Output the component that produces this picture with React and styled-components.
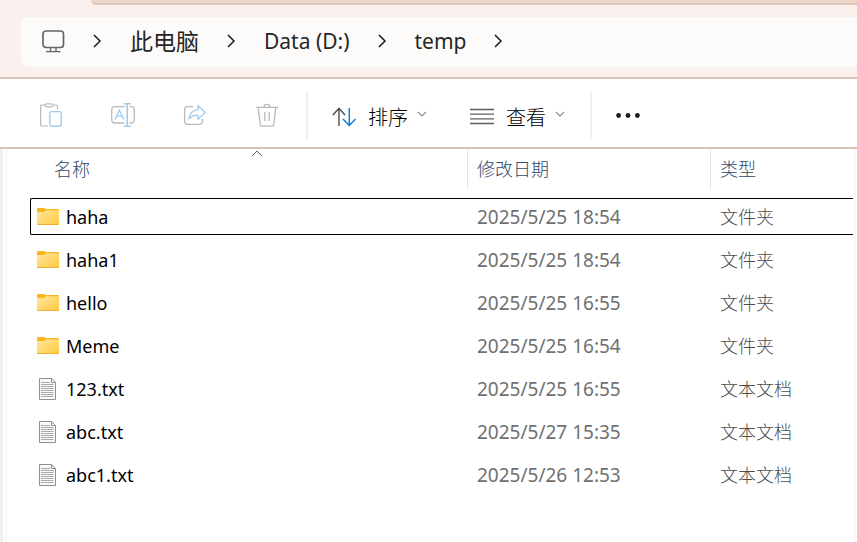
import { useState } from "react";
import styled, { createGlobalStyle, css } from "styled-components";

const GlobalStyle = createGlobalStyle`
  :root {
    --accent-line: #d9c3b7;
    --accent-025: #faf0ed;
    --accent-200: #ecd5c7;
    --gray-050: #f0f0f0;
    --font-small: 18px;
    --font-medium: 20px;
    --font-large: 21px;
  }
  * {
    box-sizing: border-box;
  }
  body {
    margin: 0;
    background: #fff;
    font-family: "Noto Sans", "Noto Sans CJK SC", sans-serif;
    font-size: var(--font-small);
  }
`;

const Window = styled.div`
  display: flex;
  flex-direction: column;
  min-height: 100vh;
`;

const Header = styled.header`
  background: var(--accent-025);
  border-bottom: 2px solid var(--accent-line);
  padding-bottom: 10px;
`;

const TabStrip = styled.div`
  height: 5px;
  margin-left: 91px;
  background: var(--accent-200);
  border-bottom: 2px solid #dfc6b8;
  border-bottom-left-radius: 5px;
`;

const AddressBar = styled.nav`
  display: flex;
  align-items: center;
  gap: 28px;
  height: 50px;
  margin: 12px 0 0 21px;
  padding: 0 0 2px 20px;
  background: #fcfbf9;
  border-radius: 7px 0 0 7px;
`;

const Crumb = styled.button`
  all: unset;
  display: flex;
  align-items: center;
  color: #262626;
  font-size: ${({ $cjk }) => ($cjk ? "23px" : "var(--font-large)")};
  line-height: 30px;
  white-space: nowrap;
  cursor: pointer;
`;

const Toolbar = styled.div`
  display: flex;
  align-items: center;
  height: 70px;
  padding: 4px 27px 0;
  border-bottom: 2px solid var(--accent-line);
`;

const IconGroup = styled.div`
  display: flex;
  gap: 24px;
`;

const MenuGroup = styled.div`
  display: flex;
  gap: 19px;
`;

const ToolButton = styled.button`
  display: flex;
  justify-content: center;
  align-items: center;
  height: 48px;
  padding: 0 12px;
  border: none;
  border-radius: 4px;
  background: none;
  color: #000;
  font-family: inherit;
  font-size: var(--font-medium);
  font-weight: 300;
  line-height: 28px;
  white-space: nowrap;
  cursor: pointer;

  &:hover:enabled {
    background: #f5f5f5;
  }
  &:disabled {
    cursor: default;
  }
`;

const Label = styled.span`
  margin: 0 9px 0 12px;
  padding-top: 5px;
`;

const Separator = styled.div`
  width: 2px;
  height: 48px;
  margin: 0 12px 0 ${({ $gap }) => $gap};
  background: var(--gray-050);
`;

const Content = styled.main`
  display: flex;
  flex: 1;
  border-left: 3px solid var(--gray-050);
  padding: 0 1px 0 2px;
`;

const Pane = styled.div`
  flex: 1;
  border-left: 2px solid #f7f7f7;
  border-right: 2px solid #f8f8f8;
  padding: 0 1px 0 23px;
`;

const Table = styled.table`
  display: block;
  width: 100%;
`;

const THead = styled.thead`
  display: block;
  margin-bottom: 9px;
`;

const TBody = styled.tbody`
  display: flex;
  flex-direction: column;
  gap: 6px;
`;

const columns = css`
  display: grid;
  grid-template-columns: 437fr 243fr 142fr;
  border: 1px solid transparent;
  border-right: none;
`;

const HeadRow = styled.tr`
  ${columns}
  border-width: 0 0 0 1px;
`;

const HeadCell = styled.th`
  position: relative;
  height: 40px;
  margin-left: ${({ $inset }) => $inset || "0"};
  padding: 0 9px;
  border-right: 1px solid ${({ $last }) => ($last ? "transparent" : "#e5e5e5")};
  color: #2f4769;
  font-weight: 300;
  line-height: 40px;
  text-align: left;
  white-space: nowrap;
`;

const SortMark = styled.svg`
  position: absolute;
  top: 1px;
  left: calc(50% - 5px);
`;

const Row = styled.tr`
  ${columns}
  border-color: ${({ $focused }) => ($focused ? "#000" : "transparent")};
  border-radius: 2px 0 0 2px;
`;

const Cell = styled.td`
  height: 35px;
  padding: 2px 9px 0;
  color: #707070;
  font-size: var(--font-small);
  line-height: 33px;
  white-space: nowrap;
`;

const DateCell = styled(Cell)`
  font-size: 19px;
`;

const TypeCell = styled(Cell)`
  color: #4c4c4c;
  font-weight: 300;
`;

const NameCell = styled(Cell)`
  display: flex;
  align-items: center;
  gap: 6px;
  padding: 0 6px;
  color: #000;
`;

const FileName = styled.span`
  padding-top: 2px;
`;

function Monitor() {
  return (
    <svg width="24" height="24" viewBox="0 0 24 24" fill="none" stroke="#666" strokeWidth="1.7">
      <rect x="2" y="2" width="20.5" height="16.5" rx="3" />
      <path d="M9.5 18.5v4M15 18.5v4M5 22.6h14.5" strokeWidth="1.4" />
    </svg>
  );
}

function ChevronRight() {
  return (
    <svg width="9" height="14" viewBox="0 0 9 14" fill="none" stroke="#1b1b1b" strokeWidth="1.5">
      <path d="M1 1l6 6-6 6" />
    </svg>
  );
}

function ChevronDown() {
  return (
    <svg width="10" height="10" viewBox="0 0 10 10" fill="none" stroke="#8a8a8a" strokeWidth="1.1">
      <path d="M1 2l4 4 4-4" />
    </svg>
  );
}

function Paste() {
  return (
    <svg width="24" height="24" viewBox="0 0 24 24" fill="none" strokeWidth="1.2">
      <g stroke="#b9b9b9">
        <path d="M6 2H2.6Q1.6 2 1.6 3v19q0 1 1 1H9M14 2h3.4q1 0 1 1v3" />
        <rect x="6" y=".8" width="8" height="3" rx="1.5" />
      </g>
      <rect x="10.8" y="8.6" width="11.4" height="14.6" rx="1.6" stroke="#9fcdf0" strokeWidth="1.4" />
    </svg>
  );
}

function Rename() {
  return (
    <svg width="24" height="24" viewBox="0 0 24 24" fill="none" strokeWidth="1.3">
      <path
        d="M13.5 3.6H3.8Q.7 3.6 .7 7v9.5q0 3.5 3.2 3.5h9.6M18.6 3.6h1.5q3.2 0 3.2 3.5v9.4q0 3.5-3.2 3.5h-1.5"
        stroke="#b9b9b9"
      />
      <path d="M4 16.5L8.4 7l4.4 9.5M5.4 13.2h6" stroke="#9fcdf0" />
      <path d="M12.5.8h7.4M12.5 23.2h7.4M16.2.8v22.4" stroke="#9fcdf0" strokeWidth="1.6" />
    </svg>
  );
}

function Share() {
  return (
    <svg width="24" height="24" viewBox="0 0 24 24" fill="none" strokeWidth="1.3">
      <path d="M10 3.6H4.8Q1.6 3.6 1.6 7v11q0 3.3 3.2 3.3h11.4q3.2 0 3.2-3.3v-2" stroke="#b9b9b9" />
      <path
        d="M15 2.5l7.2 7L15 16.2v-3.9q-5.4-.5-9.2 3.6 1.4-8.5 9.2-9.3z"
        stroke="#9fcdf0"
        strokeLinejoin="round"
      />
    </svg>
  );
}

function Trash() {
  return (
    <svg width="24" height="24" viewBox="0 0 24 24" fill="none" stroke="#b9b9b9" strokeWidth="1.3">
      <path d="M1 4.4h22M9 4.2q0-2.8 3-2.8t3 2.8M3.2 4.6l2 17q.2 1.6 1.8 1.6h10q1.6 0 1.8-1.6l2-17" />
      <path d="M9.8 9v9M14.2 9v9" />
    </svg>
  );
}

function Sort() {
  return (
    <svg width="24" height="24" viewBox="0 0 24 24" fill="none" strokeWidth="1.4">
      <path d="M.8 12L7 5.4 13 12M7 5.4V23" stroke="#4f4f4f" />
      <path d="M11 16l6.3 6.6 6.2-6.6M17.3 22.6V5" stroke="#0a78d4" />
    </svg>
  );
}

function Lines() {
  return (
    <svg width="24" height="22" viewBox="0 0 24 22" stroke="#5a5f5f" strokeWidth="1.3">
      <path d="M0 5.5h24M0 10.2h24M0 14.8h24M0 19.5h24" />
    </svg>
  );
}

function Dots() {
  return (
    <svg width="24" height="6" viewBox="0 0 24 6" fill="#1b1b1b">
      <circle cx="2.6" cy="3.5" r="2.4" />
      <circle cx="12" cy="3.5" r="2.4" />
      <circle cx="21.4" cy="3.5" r="2.4" />
    </svg>
  );
}

function Folder() {
  return (
    <svg width="23" height="23" viewBox="0 0 23 23">
      <defs>
        <linearGradient id="folder" x1="0" y1="0" x2="1" y2="1">
          <stop offset="0" stopColor="#ffe7a0" />
          <stop offset="1" stopColor="#ffc93c" />
        </linearGradient>
      </defs>
      <path d="M0 4q0-1 1-1h6l1.5 1H21q1 0 1 1v4H0z" fill="#f8b51c" />
      <path d="M0 7h7l2-1.8h12q1 0 1 1V19q0 1-1 1H1q-1 0-1-1z" fill="url(#folder)" />
      <path d="M0 19.5h22" stroke="#eeb02e" />
    </svg>
  );
}

function TextFile() {
  return (
    <svg width="23" height="23" viewBox="0 0 23 23" fill="none">
      <path d="M2.5 1.5h12l4 4v17h-16z" fill="#fafafa" stroke="#8f8f8f" />
      <path d="M14.5 1.5v4h4" stroke="#8f8f8f" />
      <path
        d="M4 5.5h9M4 7.5h12.5M4 9.5h12.5M4 11.5h12.5M4 13.5h12.5M4 15.5h12.5M4 17.5h12.5M4 19.5h12.5"
        stroke="#a9a9a9"
      />
    </svg>
  );
}

const files = [
  { name: "haha", date: "2025/5/25 18:54", type: "文件夹" },
  { name: "haha1", date: "2025/5/25 18:54", type: "文件夹" },
  { name: "hello", date: "2025/5/25 16:55", type: "文件夹" },
  { name: "Meme", date: "2025/5/25 16:54", type: "文件夹" },
  { name: "123.txt", date: "2025/5/25 16:55", type: "文本文档" },
  { name: "abc.txt", date: "2025/5/27 15:35", type: "文本文档" },
  { name: "abc1.txt", date: "2025/5/26 12:53", type: "文本文档" },
];

function App() {
  const [focused, setFocused] = useState("haha");

  return (
    <Window lang="zh-CN">
      <GlobalStyle />
      <Header>
        <TabStrip />
        <AddressBar>
          <Crumb aria-label="此电脑">
            <Monitor />
          </Crumb>
          <ChevronRight />
          <Crumb $cjk>此电脑</Crumb>
          <ChevronRight />
          <Crumb>Data (D:)</Crumb>
          <ChevronRight />
          <Crumb>temp</Crumb>
          <ChevronRight />
        </AddressBar>
      </Header>
      <Toolbar>
        <IconGroup>
          <ToolButton aria-label="粘贴" disabled>
            <Paste />
          </ToolButton>
          <ToolButton aria-label="重命名" disabled>
            <Rename />
          </ToolButton>
          <ToolButton aria-label="共享" disabled>
            <Share />
          </ToolButton>
          <ToolButton aria-label="删除" disabled>
            <Trash />
          </ToolButton>
        </IconGroup>
        <Separator $gap="15px" />
        <MenuGroup>
          <ToolButton>
            <Sort />
            <Label>排序</Label>
            <ChevronDown />
          </ToolButton>
          <ToolButton>
            <Lines />
            <Label>查看</Label>
            <ChevronDown />
          </ToolButton>
        </MenuGroup>
        <Separator $gap="13px" />
        <ToolButton aria-label="更多">
          <Dots />
        </ToolButton>
      </Toolbar>
      <Content>
        <Pane>
          <Table>
            <THead>
              <HeadRow>
                <HeadCell $inset="14px">
                  名称
                  <SortMark width="12" height="7" viewBox="0 0 12 7" fill="none" stroke="#6a6a6a">
                    <path d="M.8 6.2L6 1l5.2 5.2" />
                  </SortMark>
                </HeadCell>
                <HeadCell>修改日期</HeadCell>
                <HeadCell $last>类型</HeadCell>
              </HeadRow>
            </THead>
            <TBody>
              {files.map(({ name, date, type }) => (
                <Row key={name} $focused={focused === name} onClick={() => setFocused(name)}>
                  <NameCell>
                    {name.endsWith(".txt") ? <TextFile /> : <Folder />}
                    <FileName>{name}</FileName>
                  </NameCell>
                  <DateCell>{date}</DateCell>
                  <TypeCell>{type}</TypeCell>
                </Row>
              ))}
            </TBody>
          </Table>
        </Pane>
      </Content>
    </Window>
  );
}

export default App;
